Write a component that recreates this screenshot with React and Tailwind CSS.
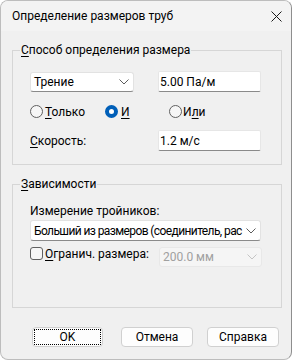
import React from "react";

const F = { fontFamily: 'Roboto, "Noto Sans", sans-serif' };

function Chevron({ color = "#5c5c5c" }) {
  return (
    <svg width="10" height="6" viewBox="0 0 10 6" fill="none">
      <path d="M0.5 0.5 L5 5 L9.5 0.5" stroke={color} strokeWidth="1" />
    </svg>
  );
}

function Radio({ checked }) {
  return checked ? (
    <span className="box-border w-[13px] h-[13px] rounded-full border-[4px] border-[#005fb8] bg-white shrink-0" />
  ) : (
    <span className="box-border w-[13px] h-[13px] rounded-full border border-[#606060] bg-[#f6f6f6] shrink-0" />
  );
}

export default function App() {
  return (
    <div
      style={F}
      className="w-[292px] h-[360px] box-border bg-[#f0f0f0] border border-[#bdbdbd] border-r-[#8e8e8e] rounded-[8px] overflow-hidden flex flex-col text-[12px] leading-[16px] text-black"
    >
      <div className="h-[30px] shrink-0 flex items-center justify-between pl-[11px] pr-[8px] bg-[#f3f3f3]">
        <span className="text-[12px]">Определение размеров труб</span>
        <svg width="11" height="11" viewBox="0 0 11 11" className="mr-[1px]">
          <path d="M0.5 0.5 L10.5 10.5 M10.5 0.5 L0.5 10.5" stroke="#1a1a1a" strokeWidth="1" />
        </svg>
      </div>

      <div className="flex flex-col pl-[11px] pr-[9px] pt-[11px]">
        <fieldset className="border border-[#d6d6d6] p-0 m-0">
          <legend className="ml-[7px] px-[1px] leading-[16px]">
            <span className="underline underline-offset-2">С</span>пособ определения размера
          </legend>
          <div className="pl-[17px] pr-[20px] pt-[13px] pb-[13px]">
            <div className="flex items-start">
              <div className="mt-[1px] box-border w-[104px] h-[20px] bg-white border border-[#e2e2e2] border-b-[#8a8a8a] rounded-[3px] flex items-center justify-between pl-[3px] pr-[4px]">
                <span>Трение</span>
                <Chevron />
              </div>
              <div className="ml-[24px] box-border w-[103px] h-[21px] bg-white border border-[#e6e6e6] border-b-[#8a8a8a] rounded-[2px] flex items-center pl-[1px]">
                5.00 Па/м
              </div>
            </div>
            <div className="flex items-center h-[13px] mt-[13px]">
              <span className="w-[75px] flex items-center">
                <Radio />
                <span className="ml-[2px]">
                  <span className="underline underline-offset-2">Т</span>олько
                </span>
              </span>
              <span className="w-[64px] flex items-center">
                <Radio checked />
                <span className="ml-[3px] underline underline-offset-2">И</span>
              </span>
              <span className="flex items-center">
                <Radio />
                <span className="ml-[1px]">
                  И<span className="underline underline-offset-2">л</span>и
                </span>
              </span>
            </div>
            <div className="flex items-center mt-[12px]">
              <span className="w-[128px]">
                <span className="underline underline-offset-2">С</span>корость:
              </span>
              <div className="box-border w-[103px] h-[21px] bg-white border border-[#e6e6e6] border-b-[#8a8a8a] rounded-[2px] flex items-center pl-[1px]">
                1.2 м/с
              </div>
            </div>
          </div>
        </fieldset>

        <fieldset className="mt-[11px] border border-[#d6d6d6] p-0 m-0">
          <legend className="ml-[7px] px-[1px] leading-[16px]">
            <span className="underline underline-offset-2">З</span>ависимости
          </legend>
          <div className="pl-[17px] pr-[19px] pt-[11px] pb-[40px]">
            <div className="leading-[16px]">Измерение тройников:</div>
            <div className="mt-[1px] box-border w-[231px] h-[21px] bg-white border border-[#e2e2e2] border-b-[#8a8a8a] rounded-[3px] flex items-center pl-[3px] pr-[4px]">
              <span className="flex-1 min-w-0 overflow-hidden whitespace-nowrap tracking-[-0.6px]">Больший из размеров (соединитель, рас</span>
              <span className="ml-[3px] shrink-0 flex"><Chevron /></span>
            </div>
            <div className="flex items-start mt-[6px]">
              <div className="flex items-center h-[13px]">
                <span className="box-border w-[13px] h-[13px] rounded-[3px] border border-[#606060] bg-[#f6f6f6] shrink-0" />
                <span className="ml-[2px]">
                  <span className="underline underline-offset-2">О</span>гранич. размера:
                </span>
              </div>
              <div className="ml-auto box-border w-[103px] h-[20px] bg-[#f5f5f5] border border-[#e8e8e8] rounded-[3px] flex items-center justify-between pl-[3px] pr-[4px] text-[#a0a0a0]">
                <span>200.0 мм</span>
                <Chevron color="#c4c4c4" />
              </div>
            </div>
          </div>
        </fieldset>

        <div className="flex mt-[19px] pl-[20px]">
          <div className="box-border w-[71px] h-[20px] bg-[#fdfdfd] border border-[#cfcfcf] rounded-[4px] p-[1px]">
            <div className="w-full h-full border border-dotted border-black flex items-center justify-center">OK</div>
          </div>
          <div className="ml-[18px] box-border w-[72px] h-[20px] bg-[#fdfdfd] border border-[#d0d0d0] rounded-[4px] flex items-center justify-center">
            Отмена
          </div>
          <div className="ml-[14px] box-border w-[72px] h-[20px] bg-[#fdfdfd] border border-[#d0d0d0] rounded-[4px] flex items-center justify-center">
            Справка
          </div>
        </div>
      </div>
    </div>
  );
}
